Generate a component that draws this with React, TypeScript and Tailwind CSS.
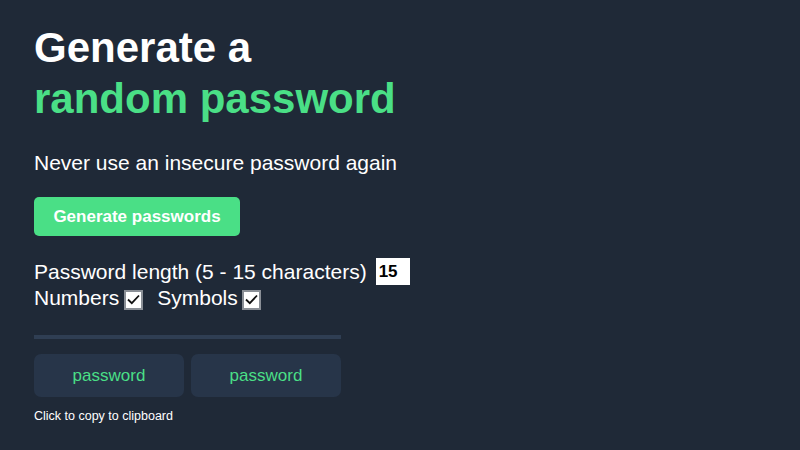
import { useState } from "react";

const font = { fontFamily: '"Liberation Sans", Arial, sans-serif' };

function Check({ checked }: { checked: boolean }) {
  return (
    <span className="inline-flex w-[19px] h-[20px] bg-white border-2 border-[#8a8f96] items-center justify-center">
      {checked && (
        <svg width="13" height="11" viewBox="0 0 13 11" fill="none">
          <path d="M1 5.5 L4.8 9.2 L12 1.5" stroke="#111" strokeWidth="1.8" />
        </svg>
      )}
    </span>
  );
}

export default function App() {
  const [length] = useState("15");
  const [passwords] = useState(["password", "password"]);

  return (
    <div
      className="w-[800px] h-[450px] bg-[#1f2937] text-white px-[34px] pt-[22px] overflow-hidden"
      style={font}
    >
      <h1 className="text-[42px] leading-[51px] font-bold">
        Generate a
        <br />
        <span className="text-[#4adf86]">random password</span>
      </h1>
      <p className="text-[21px] leading-[24px] mt-[27px]">
        Never use an insecure password again
      </p>
      <button className="mt-[22px] w-[206px] h-[39px] bg-[#4adf86] rounded-[5px] text-[17px] font-bold text-white">
        Generate passwords
      </button>
      <div className="mt-[22px] flex items-center text-[21px] leading-[27px]">
        <span>Password length (5 - 15 characters)</span>
        <span className="ml-[9px] w-[34px] h-[27px] bg-white text-black font-bold text-[17px] leading-[27px] pl-[3px]">
          {length}
        </span>
      </div>
      <div className="flex items-center text-[21px] leading-[26px]">
        <span>Numbers</span>
        <span className="ml-[5px]">
          <Check checked />
        </span>
        <span className="ml-[14px]">Symbols</span>
        <span className="ml-[4px]">
          <Check checked />
        </span>
      </div>
      <div className="w-[307px] h-[4px] bg-[#2f3e53] mt-[24px]" />
      <div className="flex gap-[7px] mt-[15px] w-[307px]">
        {passwords.map((pw, i) => (
          <div
            key={`pw_${i}`}
            className="w-[150px] h-[43px] bg-[#273549] rounded-[7px] flex items-center justify-center text-[#4adf86] text-[17px]"
          >
            {pw}
          </div>
        ))}
      </div>
      <p className="text-[12.5px] mt-[10px]">Click to copy to clipboard</p>
    </div>
  );
}
